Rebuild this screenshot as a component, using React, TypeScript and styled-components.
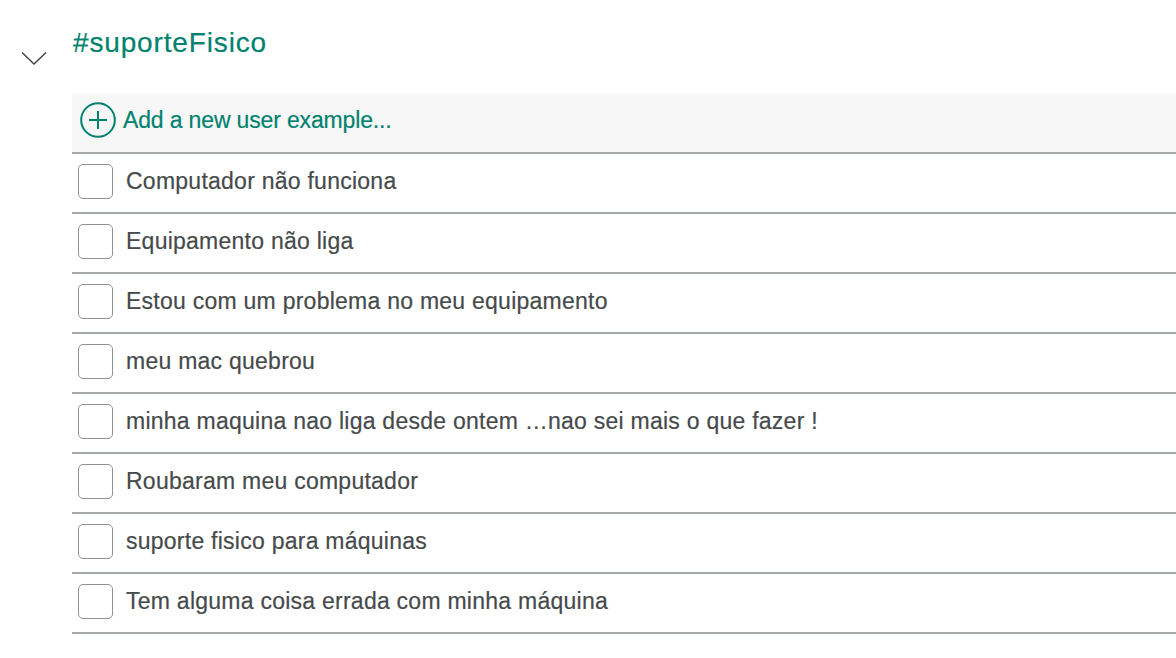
import React from "react";
import styled, { createGlobalStyle } from "styled-components";

const GlobalStyle = createGlobalStyle`
  html, body {
    margin: 0;
    padding: 0;
    background: #ffffff;
    font-family: "Liberation Sans", Arial, Helvetica, sans-serif;
  }
`;

const Section = styled.section`
  display: flex;
  align-items: flex-start;
  width: 1176px;
`;

const Gutter = styled.div`
  width: 72px;
  flex: none;
  display: flex;
  justify-content: flex-start;
  padding-top: 51px;
  padding-left: 21px;
  box-sizing: border-box;
`;

const ToggleButton = styled.button`
  border: none;
  background: none;
  padding: 0;
  margin: 0;
  display: block;
  cursor: pointer;
  line-height: 0;
`;

const Main = styled.div`
  flex: 1;
  display: flex;
  flex-direction: column;
`;

const Title = styled.h2`
  margin: 27px 0 35px 1px;
  font-size: 28px;
  line-height: 32px;
  font-weight: 400;
  letter-spacing: 0.85px;
  color: #00826e;
  -webkit-text-stroke: 0.2px #00826e;
`;

const List = styled.ul`
  list-style: none;
  margin: 0;
  padding: 0;
`;

const Row = styled.li<{ $add?: boolean }>`
  display: flex;
  align-items: center;
  height: 58px;
  box-sizing: content-box;
  border-bottom: 2px solid #a3a8a6;
  background: ${(p) => (p.$add ? "#f7f7f7" : "#ffffff")};
`;

const RowInner = styled.div<{ $lift: number }>`
  display: flex;
  align-items: center;
  margin-top: -${(p) => p.$lift}px;
`;

const AddIcon = styled.svg`
  display: block;
  margin-left: 8px;
  margin-right: 7px;
  flex: none;
`;

const AddText = styled.span`
  font-size: 23px;
  letter-spacing: -0.15px;
  color: #00826e;
  -webkit-text-stroke: 0.2px #00826e;
`;

const CheckBox = styled.span`
  display: block;
  flex: none;
  width: 33px;
  height: 33px;
  margin-left: 6px;
  margin-right: 13px;
  border: 1.5px solid #8d9391;
  border-radius: 5px;
  background: #ffffff;
`;

const ExampleText = styled.span`
  font-size: 23px;
  letter-spacing: 0.25px;
  color: #464a4b;
  -webkit-text-stroke: 0.2px #464a4b;
`;

const examples = [
  "Computador não funciona",
  "Equipamento não liga",
  "Estou com um problema no meu equipamento",
  "meu mac quebrou",
  "minha maquina nao liga desde ontem …nao sei mais o que fazer !",
  "Roubaram meu computador",
  "suporte fisico para máquinas",
  "Tem alguma coisa errada com minha máquina",
];

export default function App() {
  return (
    <>
      <GlobalStyle />
      <Section>
        <Gutter>
          <ToggleButton aria-label="Collapse">
            <svg width="26" height="14" viewBox="0 0 26 14">
              <path d="M1 1.5 L13 13 L25 1.5" fill="none" stroke="#3f4344" strokeWidth="1.4" />
            </svg>
          </ToggleButton>
        </Gutter>
        <Main>
          <Title>#suporteFisico</Title>
          <List>
            <Row $add>
              <RowInner $lift={6}>
                <AddIcon width="36" height="36" viewBox="0 0 36 36">
                  <circle cx="18" cy="18" r="16.8" fill="none" stroke="#00826e" strokeWidth="2" />
                  <path d="M18 9 V27 M9 18 H27" stroke="#00826e" strokeWidth="2" />
                </AddIcon>
                <AddText>Add a new user example...</AddText>
              </RowInner>
            </Row>
            {examples.map((t) => (
              <Row key={t}>
                <RowInner $lift={3}>
                  <CheckBox />
                  <ExampleText>{t}</ExampleText>
                </RowInner>
              </Row>
            ))}
          </List>
        </Main>
      </Section>
    </>
  );
}
